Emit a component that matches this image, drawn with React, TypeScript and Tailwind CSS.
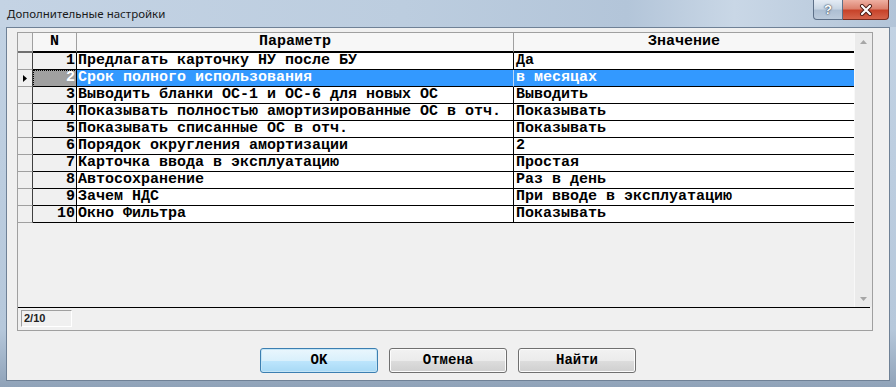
import React from "react";

const rows: [string, string][] = [
  ["Предлагать карточку НУ после БУ", "Да"],
  ["Срок полного использования", "в месяцах"],
  ["Выводить бланки ОС-1 и ОС-6 для новых ОС", "Выводить"],
  ["Показывать полностью амортизированные ОС в отч.", "Показывать"],
  ["Показывать списанные ОС в отч.", "Показывать"],
  ["Порядок округления амортизации", "2"],
  ["Карточка ввода в эксплуатацию", "Простая"],
  ["Автосохранение", "Раз в день"],
  ["Зачем НДС", "При вводе в эксплуатацию"],
  ["Окно Фильтра", "Показывать"],
];

const mono = "font-['Liberation_Mono',monospace] font-bold";

function Row({ idx, p, v }: { idx: number; p: string; v: string }) {
  const sel = idx === 2;
  return (
    <div className={`flex h-[17px] ${mono} text-[15px] leading-[16px]`}>
      <div className="w-[15px] shrink-0 border-r border-r-[#404040] border-b border-b-[#a0a0a0] bg-[#f0f0f0] flex items-center pl-[5px]">
        {sel && (
          <svg width="4" height="7" viewBox="0 0 4 7">
            <path d="M0 0 L4 3.5 L0 7 Z" fill="#000" />
          </svg>
        )}
      </div>
      <div
        className={`w-[44px] shrink-0 border-r border-r-black border-b border-b-black flex items-center justify-end pr-[1px] ${
          sel ? "bg-[#a0a0a0] text-white outline-1 outline-dotted outline-black -outline-offset-1" : "bg-[#f0f0f0] text-black"
        }`}
      >
        {idx}
      </div>
      <div
        className={`w-[437px] shrink-0 border-b border-b-black border-r pl-[1px] whitespace-nowrap overflow-hidden ${
          sel ? "bg-[#3399ff] text-white border-r-[#bcd9f7]" : "bg-white text-black border-r-black"
        }`}
      >
        {p}
      </div>
      <div
        className={`w-[340px] shrink-0 border-b border-b-black pl-[2px] whitespace-nowrap overflow-hidden ${
          sel ? "bg-[#3399ff] text-white" : "bg-white text-black"
        }`}
      >
        {v}
      </div>
    </div>
  );
}

export default function App() {
  return (
    <div className="w-[896px] h-[387px] flex flex-col overflow-hidden bg-[linear-gradient(to_bottom,#c3d3e4,#b6c8db_85%,#8fa2b8)]">
      {/* title bar */}
      <div className="h-[27px] shrink-0 flex items-start justify-between bg-[linear-gradient(to_right,#c4d3e4_0%,#bccddf_45%,#b3c5d9_70%,#c9d7e6_82%,#b2c4d8_100%)]">
        <div className="pl-[7px] pt-[6px] text-[11.5px] leading-[16px] text-[#1a1a1a] font-['Noto_Sans',sans-serif]">
          Дополнительные настройки
        </div>
        <div className="flex mr-[7px]">
          <div className="w-[30px] h-[20px] border border-[#5d7088] border-t-0 rounded-bl-[4px] bg-[linear-gradient(to_bottom,#e4ecf5_0%,#c9d6e4_45%,#adbfd3_55%,#bccbdc_100%)] flex items-center justify-center text-white font-['Liberation_Sans',sans-serif] font-bold text-[13px] [text-shadow:0_0_2px_#2a3a4f,0_0_1px_#2a3a4f]">
            ?
          </div>
          <div className="w-[46px] h-[20px] border border-[#7a2c1f] border-t-0 border-l-0 rounded-br-[4px] bg-[linear-gradient(to_bottom,#eeb0a2_0%,#dc826f_45%,#c7432a_55%,#d5644b_100%)] flex items-center justify-center">
            <svg width="14" height="12" viewBox="0 0 14 12">
              <path d="M3 2 L11 10 M11 2 L3 10" stroke="#4a1a12" strokeWidth="4" strokeLinecap="round" />
              <path d="M3 2 L11 10 M11 2 L3 10" stroke="#ffffff" strokeWidth="2.2" strokeLinecap="round" />
            </svg>
          </div>
        </div>
      </div>

      {/* body */}
      <div className="flex-1 flex px-[6px] pb-[6px]">
        <div className="flex-1 bg-[#f0f0f0] border border-[#6f8196] flex flex-col">
          {/* grid panel */}
          <div className="ml-[10px] mt-[4px] w-[856px] border border-[#a0a0a0] flex flex-col bg-[#f0f0f0]">
            <div className="flex h-[274px]">
              {/* data */}
              <div className="w-[836px] flex flex-col bg-[#f0f0f0]">
                <div className={`flex h-[20px] ${mono} text-[15px] leading-[18px] text-black`}>
                  <div className="w-[15px] shrink-0 border-r border-r-[#a0a0a0] border-b-2 border-b-[#707070] bg-[#f0f0f0]" />
                  <div className="w-[44px] shrink-0 border-r border-r-[#a0a0a0] border-b-2 border-b-black bg-[#f7f7f7] text-center">
                    N
                  </div>
                  <div className="w-[437px] shrink-0 border-r border-r-[#a0a0a0] border-b-2 border-b-black bg-[#f7f7f7] text-center">
                    Параметр
                  </div>
                  <div className="w-[340px] shrink-0 border-b-2 border-b-black bg-[#f7f7f7] text-center">
                    Значение
                  </div>
                </div>
                {rows.map(([p, v], i) => (
                  <Row key={i} idx={i + 1} p={p} v={v} />
                ))}
              </div>
              {/* scrollbar */}
              <div className="w-[18px] flex flex-col justify-between bg-[#ebebeb] border-l border-[#f8f8f8]">
                <div className="h-[17px] flex items-center justify-center">
                  <svg width="7" height="4" viewBox="0 0 7 4">
                    <path d="M0 4 L3.5 0 L7 4 Z" fill="#a6a6a6" />
                  </svg>
                </div>
                <div className="h-[17px] flex items-center justify-center">
                  <svg width="7" height="4" viewBox="0 0 7 4">
                    <path d="M0 0 L3.5 4 L7 0 Z" fill="#a6a6a6" />
                  </svg>
                </div>
              </div>
            </div>
            <div className="h-[1px] bg-black mr-[2px]" />
            {/* status bar */}
            <div className="h-[22px] pl-[3px] pt-[2px]">
              <div className="w-[51px] h-[17px] border border-t-[#a0a0a0] border-l-[#a0a0a0] border-b-white border-r-white flex items-center pl-[2px] font-['Liberation_Sans',sans-serif] font-bold text-[11px] text-[#222]">
                2/10
              </div>
            </div>
          </div>

          {/* buttons */}
          <div className="flex justify-center gap-[11px] mt-[17px]">
            <button className={`w-[118px] h-[25px] rounded-[3px] border border-[#3c7fb1] bg-[linear-gradient(to_bottom,#eaf6fd_0%,#d9f0fc_50%,#bee6fd_50%,#a7d9f5_100%)] shadow-[inset_0_0_0_1px_#c4e5f6] ${mono} text-[14px] text-black`}>
              OK
            </button>
            <button className={`w-[118px] h-[25px] rounded-[3px] border border-[#707070] bg-[linear-gradient(to_bottom,#f2f2f2_0%,#ebebeb_50%,#dddddd_50%,#cfcfcf_100%)] shadow-[inset_0_0_0_1px_#fcfcfc] ${mono} text-[14px] text-black`}>
              Отмена
            </button>
            <button className={`w-[118px] h-[25px] rounded-[3px] border border-[#707070] bg-[linear-gradient(to_bottom,#f2f2f2_0%,#ebebeb_50%,#dddddd_50%,#cfcfcf_100%)] shadow-[inset_0_0_0_1px_#fcfcfc] ${mono} text-[14px] text-black`}>
              Найти
            </button>
          </div>
        </div>
      </div>
    </div>
  );
}
